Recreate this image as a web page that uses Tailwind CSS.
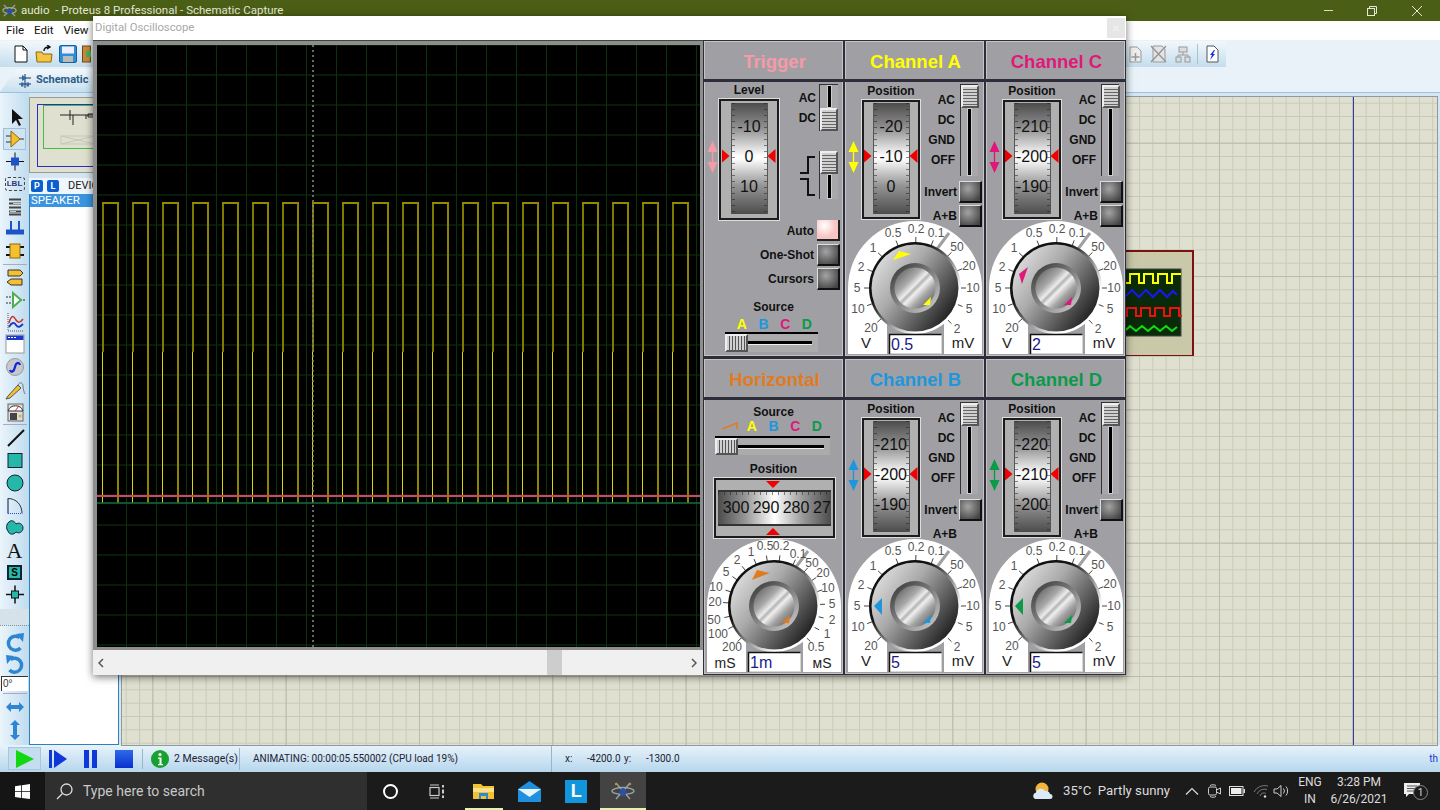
<!DOCTYPE html>
<html lang="en">
<head>
<meta charset="UTF-8">
<title>audio - Proteus 8 Professional</title>
<script src="https://cdn.jsdelivr.net/npm/@tailwindcss/browser@4"></script>
</head>
<body class="m-0 overflow-hidden">
<!-- shared gradients for the dials -->
<svg class="absolute w-0 h-0">
  <defs>
    <linearGradient id="ringG" x1="0.1" y1="0.1" x2="0.9" y2="0.9"><stop offset="0.3" stop-color="#111"/><stop offset="0.55" stop-color="#888"/><stop offset="0.8" stop-color="#fff"/></linearGradient>
    <linearGradient id="knobG" x1="0.05" y1="0.2" x2="0.95" y2="0.85"><stop offset="0" stop-color="#dcdcdc"/><stop offset="0.35" stop-color="#aaa"/><stop offset="0.62" stop-color="#6c6c6c"/><stop offset="1" stop-color="#161616"/></linearGradient>
    <linearGradient id="hubRing" x1="0.15" y1="0.1" x2="0.85" y2="0.9"><stop offset="0" stop-color="#444"/><stop offset="1" stop-color="#c0c0c0"/></linearGradient>
    <linearGradient id="hubG" x1="0.1" y1="0.1" x2="0.9" y2="0.9"><stop offset="0" stop-color="#6a6a6a"/><stop offset="0.3" stop-color="#a8a8a8"/><stop offset="0.45" stop-color="#ececec"/><stop offset="0.51" stop-color="#b4b4b4"/><stop offset="0.58" stop-color="#f0f0f0"/><stop offset="0.75" stop-color="#a4a4a4"/><stop offset="1" stop-color="#666"/></linearGradient>
  </defs>
</svg>

<div class="relative w-[1440px] h-[810px] flex flex-col overflow-hidden font-['Roboto',sans-serif]">

  <!-- title bar -->
  <div class="h-[21px] bg-[#4b5e15] flex items-center text-[#e4e8d8] shrink-0">
    <svg class="w-[15px] h-[15px] ml-[2px]" viewBox="0 0 16 16"><g fill="none" stroke="#9aa5a8" stroke-width="1.4"><path d="M2 2l12 12M14 2L2 14"/><ellipse cx="8" cy="8" rx="7" ry="3"/></g><circle cx="8" cy="9" r="3" fill="#2c4fa8"/></svg>
    <span class="ml-[4px] text-[11.500px] whitespace-pre">audio  - Proteus 8 Professional - Schematic Capture</span>
    <div class="ml-auto flex items-center">
      <span class="w-[44px] flex justify-center"><span class="w-[9px] h-[1px] bg-[#d8dcc8]"></span></span>
      <span class="w-[44px] flex justify-center"><svg class="w-[10px] h-[10px]" viewBox="0 0 10 10" fill="none" stroke="#e4e8d8"><rect x=".5" y="2.5" width="7" height="7"/><path d="M2.5 2.5v-2h7v7h-2"/></svg></span>
      <span class="w-[46px] flex justify-center"><svg class="w-[10px] h-[10px]" viewBox="0 0 10 10" stroke="#e4e8d8"><path d="M0 0l10 10M10 0L0 10"/></svg></span>
    </div>
  </div>

  <!-- menu bar -->
  <div class="h-[19px] bg-white flex items-center pl-[6px] gap-[10px] text-[11.500px] text-[#111] shrink-0">
    <span>File</span><span>Edit</span><span>View</span>
  </div>

  <!-- toolbar -->
  <div class="h-[28px] bg-[#e8f2f8] shrink-0">
    <div class="w-[1226px] h-[26px] mt-[1px] bg-[linear-gradient(#f2f8fc,#c4dded)] flex items-center pl-[14px]">
      <svg class="w-[14px] h-[18px]" viewBox="0 0 14 18"><path d="M1 1h8l4 4v12H1z" fill="#fff" stroke="#111"/><path d="M9 1v4h4" fill="none" stroke="#111"/></svg>
      <svg class="w-[19px] h-[18px] ml-[7px]" viewBox="0 0 19 18"><path d="M1 7h6l1 2h9l-1 8H2z" fill="#f4c542" stroke="#8a6a10"/><path d="M9 6c0-3 2-4 5-4M12 0l3 2-3 2" fill="none" stroke="#111" stroke-width="1.4"/></svg>
      <svg class="w-[18px] h-[18px] ml-[5px]" viewBox="0 0 18 18"><rect x="0.5" y="0.5" width="17" height="17" rx="1.5" fill="#2e8fd6" stroke="#19609a"/><rect x="3" y="1.5" width="12" height="7" fill="#eef"/><rect x="4" y="11" width="10" height="6" fill="#bbb"/></svg>
      <svg class="w-[9px] h-[18px] ml-[5px]" viewBox="0 0 9 18"><rect x="0.5" y="1" width="8" height="16" fill="#c98a3c" stroke="#6b4a1c"/><path d="M4 6h5v6H4z" fill="#4caf50"/></svg>
      <div class="ml-auto flex items-center pr-[7px]">
        <svg class="w-[13px] h-[17px]" viewBox="0 0 13 17" fill="#eee" stroke="#999"><path d="M1 1h7l4 4v11H1z"/><path d="M6.5 7v8M2.5 11h8" stroke-width="1.5"/></svg>
        <svg class="w-[17px] h-[18px] ml-[8px]" viewBox="0 0 17 18" fill="#e4e4e4" stroke="#999"><path d="M3 1h9l3 3v13H3z"/><path d="M1 1l15 16M16 1L1 17" stroke-width="1.5"/></svg>
        <svg class="w-[16px] h-[17px] ml-[8px]" viewBox="0 0 16 17" fill="#ddd" stroke="#999"><rect x="4" y="1" width="8" height="5"/><rect x="1" y="11" width="5" height="5"/><rect x="10" y="11" width="5" height="5"/><path d="M8 6v3M3 11V9h10v2" fill="none"/></svg>
        <span class="w-[1px] h-[20px] bg-[#a9c0d0] ml-[6px]"></span>
        <svg class="w-[13px] h-[18px] ml-[8px]" viewBox="0 0 13 18"><path d="M1 1h7l4 4v12H1z" fill="#fff" stroke="#555"/><path d="M8 5L4 10h2l-2 5 5-6H7l2-4z" fill="#1133dd"/></svg>
      </div>
    </div>
  </div>

  <!-- tab row -->
  <div class="h-[25px] bg-[#e8f2f8] border-b border-[#9cc3dd] shrink-0">
    <div class="w-[100px] h-[23px] mt-[1px] bg-[linear-gradient(#f2f8fc,#c8e0f0)] [clip-path:polygon(0_100%,16px_0,100%_0,100%_100%)] flex items-center pl-[18px]">
      <svg class="w-[14px] h-[14px]" viewBox="0 0 14 14"><path d="M7 0v14M1 4h12M1 10h12" stroke="#234" fill="none"/><path d="M4 1l5 3-5 3z" fill="#2a6ab0"/><rect x="3" y="8.5" width="2.5" height="4" fill="#2a6ab0"/><rect x="8.5" y="8.5" width="2.5" height="4" fill="#2a6ab0"/></svg>
      <span class="ml-[4px] text-[11px] font-bold text-[#2d5b86] whitespace-nowrap">Schematic</span>
    </div>
  </div>

  <!-- main area -->
  <div class="h-[652px] flex bg-[#d3e6f2] shrink-0">
    <!-- mode toolbar -->
    <div class="w-[29px] shrink-0 bg-[linear-gradient(90deg,#eaf4fb,#bfdcef)] flex flex-col items-center pt-[13px]">
      <svg class="w-[22px] h-[22px]" viewBox="0 0 22 22"><path d="M8 3v15l4-4 3 6 2-1-3-6h5z" fill="#111"/></svg>
      <div class="w-[23px] h-[22px] bg-[#cfe3f2] border border-[#9fc1d8] flex items-center justify-center"><svg class="w-[20px] h-[20px]" viewBox="0 0 20 20"><path d="M1 7h6M1 13h6M13 10h6" stroke="#333"/><path d="M6 2l9 8-9 8z" fill="#f4c030" stroke="#8a6a10"/></svg></div>
      <svg class="w-[22px] h-[23px]" viewBox="0 0 22 22"><path d="M2 11h18M11 2v18" stroke="#111"/><rect x="7" y="7" width="8" height="8" fill="#1c54c8"/></svg>
      <div class="w-[20px] h-[14px] my-[4px] border border-dashed border-[#444] rounded-[3px] text-[8px] leading-[12px] font-bold text-center text-[#2c3a70] font-['Liberation_Sans',sans-serif]">LBL</div>
      <svg class="w-[22px] h-[23px]" viewBox="0 0 22 22"><path d="M5 4h12M5 8h12M5 12h12M5 16h12M5 19h12" stroke="#444" stroke-width="2"/><path d="M9 8h8M6 16h6" stroke="#ccc"/></svg>
      <svg class="w-[22px] h-[22px]" viewBox="0 0 22 22"><path d="M2 14h18" stroke="#1c54c8" stroke-width="5"/><path d="M7 3v10M15 3v10" stroke="#1c54c8" stroke-width="2"/></svg>
      <svg class="w-[22px] h-[22px]" viewBox="0 0 22 22"><path d="M2 7h4M2 15h4M16 7h4M16 15h4" stroke="#111" stroke-width="2"/><rect x="6" y="4" width="10" height="14" fill="#f4c030" stroke="#8a6a10"/></svg>
      <span class="w-[24px] h-[1px] bg-[#aab] my-[2px]"></span>
      <svg class="w-[22px] h-[22px]" viewBox="0 0 22 22"><path d="M4 3h12l3 3-3 3H4zM18 12H7l-4 3 4 3h11z" fill="#f4c030" stroke="#333"/></svg>
      <svg class="w-[22px] h-[22px]" viewBox="0 0 22 22"><path d="M2 8h6M2 14h6M16 11h5" stroke="#333" stroke-dasharray="2 1"/><path d="M9 4l8 7-8 7z" fill="#fff" stroke="#4cb050" stroke-width="2"/></svg>
      <svg class="w-[22px] h-[22px]" viewBox="0 0 22 22"><path d="M4 2v18h16" stroke="#555" stroke-dasharray="1 1" fill="none"/><path d="M5 12c3-10 5-6 7-3s4 3 7-1" stroke="#c83232" stroke-width="1.5" fill="none"/><path d="M5 16c3-5 5-5 7-2s4 2 7-1" stroke="#1c38c8" stroke-width="1.8" fill="none"/></svg>
      <svg class="w-[20px] h-[20px] my-[1px]" viewBox="0 0 20 20"><rect x="1" y="1" width="18" height="18" fill="#fff" stroke="#999"/><rect x="1.5" y="1.5" width="17" height="4.5" fill="#1c38c8"/><path d="M3 3.5h8" stroke="#fff" stroke-dasharray="2 1"/></svg>
      <svg class="w-[20px] h-[22px] my-[1px]" viewBox="0 0 20 20"><circle cx="10" cy="10" r="8.5" fill="#c8c8cc" stroke="#999"/><path d="M5 13c1 3 4 2 5-3s4-5 5-2" stroke="#0a28d8" stroke-width="2.2" fill="none"/></svg>
      <svg class="w-[22px] h-[22px]" viewBox="0 0 22 22"><path d="M4 17l10-11 3 3-11 10-4 1z" fill="#f4c030" stroke="#555"/><path d="M14 6c2-4 5-2 5 1s1 6 2 8" fill="none" stroke="#777"/></svg>
      <svg class="w-[22px] h-[22px]" viewBox="0 0 22 22"><rect x="4" y="3" width="15" height="17" fill="#ddd" stroke="#666"/><path d="M4 10a8 8 0 0 1 15 0z" fill="#fff" stroke="#333"/><path d="M11 10l4-5" stroke="#d22"/><rect x="6" y="12" width="7" height="7" fill="#444"/><circle cx="16" cy="15" r="1.5" fill="#e0b020"/></svg>
      <span class="w-[24px] h-[1px] bg-[#aab] my-[1px]"></span>
      <svg class="w-[22px] h-[22px] mt-[1px]" viewBox="0 0 22 22"><path d="M4 19L20 3" stroke="#111" stroke-width="2"/></svg>
      <svg class="w-[22px] h-[23px]" viewBox="0 0 22 22"><rect x="4" y="4" width="14" height="14" fill="#25b8a8" stroke="#123"/></svg>
      <svg class="w-[22px] h-[22px]" viewBox="0 0 22 22"><circle cx="11" cy="11" r="8" fill="#25b8a8" stroke="#123"/></svg>
      <svg class="w-[22px] h-[23px]" viewBox="0 0 22 22"><path d="M4 19V4c8 0 14 6 14 15" fill="none" stroke="#333"/><path d="M4 19h14M4 19V4" stroke="#2c50c8" stroke-dasharray="1 1"/></svg>
      <svg class="w-[22px] h-[22px]" viewBox="0 0 22 22"><path d="M5 5c3-3 6 0 7 2 3-2 7 0 7 4s-4 6-7 4c-2 3-7 3-8-1-2-2-2-7 1-9z" fill="#25b8a8" stroke="#123"/></svg>
      <span class="h-[23px] leading-[23px] text-[22px] font-['Liberation_Serif',serif] text-[#111]">A</span>
      <div class="w-[15px] h-[15px] my-[3px] bg-[#25b8a8] border-2 border-[#123] flex items-center justify-center text-[10px] font-bold font-['Liberation_Sans',sans-serif] leading-none">S</div>
      <svg class="w-[22px] h-[23px]" viewBox="0 0 22 22"><path d="M2 11h18M11 2v18" stroke="#111" stroke-width="1.5"/><rect x="7.5" y="7.5" width="7" height="7" fill="#25b8a8" stroke="#111"/></svg>
      <div class="w-[29px] h-[16px] bg-[#d6e2ea] mt-[3px]"></div>
      <div class="w-[29px] border-t border-dotted border-[#7d93a3] mb-[6px]"></div>
      <svg class="w-[20px] h-[22px]" viewBox="0 0 20 20"><path d="M15.500 15a7 7 0 1 1-1-10.500" fill="none" stroke="#2e86d0" stroke-width="3.500"/><path d="M11 1l8-1-1 9z" fill="#2e86d0"/></svg>
      <svg class="w-[20px] h-[22px]" viewBox="0 0 20 20"><path d="M5.500 4.500a7 7 0 1 1-1 10.500" fill="none" stroke="#2e86d0" stroke-width="3.500"/><path d="M9 1L1 0l1 9z" fill="#2e86d0"/></svg>
      <div class="w-[27px] h-[15px] bg-white border-l border-t border-[#333] text-[10px] leading-[13px] pl-[1px] font-['Liberation_Sans',sans-serif] text-[#333]">0°</div>
      <span class="w-[24px] h-[1px] bg-[#aab] my-[2px]"></span>
      <svg class="w-[20px] h-[22px]" viewBox="0 0 20 20"><path d="M1 10l5-5v3h8V5l5 5-5 5v-3H6v3z" fill="#2e86d0"/></svg>
      <svg class="w-[20px] h-[24px]" viewBox="0 0 20 20"><path d="M10 0l5 5h-3v10h3l-5 5-5-5h3V5H5z" fill="#2e86d0"/></svg>
    </div>

    <!-- preview and device list -->
    <div class="w-[90px] shrink-0 flex flex-col pt-[4px]">
      <div class="h-[76px] bg-[#e0e0d0] border border-[#9a9a90] pl-[7px] pt-[6px]">
        <div class="h-[63px] border border-[#2c2cc8] border-r-0 pl-[5px]">
          <div class="h-[44px] border border-[#3ec03e] border-r-0 relative">
            <svg class="absolute left-[14px] top-[2px] w-[40px] h-[40px]" viewBox="0 0 40 40" fill="none" stroke="#222"><path d="M2 7h36M12 2v10M15 7v10M28 7v4M30 6h6v3h-6z"/><path d="M3 28h34v8H3zM3 28l34 8M37 28L3 36" stroke="#c8c8b8"/></svg>
          </div>
        </div>
      </div>
      <div class="h-[16px] mt-[5px] flex items-center gap-[4px] pl-[2px] bg-[#eef5fb] text-[11px] text-[#222]">
        <span class="w-[12px] h-[12px] rounded-[2px] bg-[#0b5fd0] text-white text-[9px] leading-[12px] font-bold text-center">P</span>
        <span class="w-[12px] h-[12px] rounded-[2px] bg-[#0b5fd0] text-white text-[9px] leading-[12px] font-bold text-center">L</span>
        <span class="ml-[5px] whitespace-nowrap overflow-hidden">DEVICES</span>
      </div>
      <div class="flex-1 bg-white border border-t-0 border-[#2e7fbc]">
        <div class="h-[13px] bg-[#3a94e0] text-white text-[11.500px] leading-[13px] pl-[1px]">SPEAKER</div>
      </div>
    </div>

    <!-- schematic sheet -->
    <div class="relative flex-1 ml-[3px] mr-[3px] mt-[4px] outline outline-1 outline-[#8e9a9e]">
      <svg class="block w-full h-full" viewBox="0 0 1315 648">
        <defs>
          <pattern id="minor" width="13.333" height="13.333" x="3.67" y="5.7" patternUnits="userSpaceOnUse"><path d="M0 .5H13.4M.5 0V13.4" stroke="#c9c9b8" fill="none"/></pattern>
          <pattern id="major" width="133.33" height="133.33" x="30.3" y="45.7" patternUnits="userSpaceOnUse"><path d="M0 .5H134M.5 0V134" stroke="#bcbcab" fill="none"/></pattern>
        </defs>
        <rect width="1315" height="648" fill="#e0e0d0"/>
        <rect width="1315" height="648" fill="url(#minor)"/>
        <rect width="1315" height="648" fill="url(#major)"/>
        <path d="M1231.500 0V648" stroke="#3838a8"/>
      </svg>
      <!-- oscilloscope symbol on the sheet -->
      <svg class="absolute left-[970px] top-[151px] w-[104px] h-[108px]" viewBox="1092 248 104 108">
        <rect x="1093" y="251" width="100" height="105" fill="#c9c9a9" stroke="#7a1212" stroke-width="2"/>
        <rect x="1100" y="269" width="81" height="67" fill="#0a2a0a" stroke="#444"/>
        <path d="M1126 283h4v-9h9v9h5v-9h9v9h5v-9h9v9h5v-9h9" fill="none" stroke="#ffff00" stroke-width="2"/>
        <path d="M1126 296l6-6 7 7 7-7 7 7 7-7 7 7 6-6 4 4" fill="none" stroke="#1818f0" stroke-width="2"/>
        <path d="M1126 316h1v-8h9v8h5v-8h9v8h5v-8h9v8h6v-8h9v8h3" fill="none" stroke="#f01010" stroke-width="2"/>
        <path d="M1126 330l4-4 6 5 6-5 6 5 6-5 6 5 6-5 6 5 5-4" fill="none" stroke="#10e010" stroke-width="2"/>
      </svg>
    </div>
  </div>

  <!-- status bar -->
  <div class="h-[27px] bg-[linear-gradient(#e8f3fb,#b6d6ec)] flex items-center text-[10px] text-[#223] shrink-0">
    <div class="ml-[8px] w-[33px] h-[23px] bg-[#c5deef] border border-[#a5c6de] flex items-center justify-center"><svg class="w-[19px] h-[18px]" viewBox="0 0 19 18"><path d="M1 0l18 9-18 9z" fill="#12d812"/></svg></div>
    <svg class="ml-[8px] w-[18px] h-[18px]" viewBox="0 0 18 18"><path d="M0 0h3v18H0z" fill="#1038d8"/><path d="M5 0l13 9-13 9z" fill="#1038d8"/></svg>
    <svg class="ml-[17px] w-[14px] h-[18px]" viewBox="0 0 14 18" fill="#1038d8"><rect width="5" height="18"/><rect x="8" width="5" height="18"/></svg>
    <div class="ml-[17px] w-[18px] h-[18px] bg-[linear-gradient(#2f6be8,#0a2fd0)]"></div>
    <span class="ml-[9px] w-[1px] h-[20px] bg-[#9bb5c8]"></span>
    <svg class="ml-[8px] w-[18px] h-[18px]" viewBox="0 0 18 18"><circle cx="9" cy="9" r="9" fill="#18a030"/><circle cx="9" cy="4.5" r="1.6" fill="#fff"/><path d="M7 7.5h3.5V14H12v1.2H7V14h1.5V8.7H7z" fill="#fff"/></svg>
    <span class="ml-[5px] w-[65px] whitespace-nowrap text-[10.500px]">2 Message(s)</span>
    <span class="w-[1px] h-[22px] bg-[#9bb5c8]"></span>
    <span class="ml-[13px] w-[298px] whitespace-nowrap">ANIMATING: 00:00:05.550002 (CPU load 19%)</span>
    <span class="w-[1px] h-[27px] bg-[#9bb5c8]"></span>
    <span class="ml-[13px] w-[22px]">x:</span>
    <span class="w-[37px]">-4200.0</span>
    <span class="w-[22px]">y:</span>
    <span class="w-[60px]">-1300.0</span>
    <span class="ml-auto mr-[2px] text-[#1a3ad0]">th</span>
  </div>

  <!-- windows taskbar -->
  <div class="h-[38px] bg-[#1b1b1b] flex items-center text-[#dcdcdc] shrink-0">
    <div class="w-[45px] h-full bg-[#151515] flex items-center justify-center"><svg class="w-[15px] h-[15px]" viewBox="0 0 15 15" fill="#fff"><path d="M0 2.2l6.2-.9v5.9H0zM7 1.2L15 0v7.2H7zM0 8h6.2v5.9L0 13zM7 8h8v7l-8-1.1z"/></svg></div>
    <div class="w-[322px] h-full bg-[#2f2f2f] flex items-center pl-[11px]">
      <svg class="w-[17px] h-[17px]" viewBox="0 0 17 17" fill="none" stroke="#ddd" stroke-width="1.3"><circle cx="10.5" cy="6.5" r="5.5"/><path d="M6.5 10.5L1 16"/></svg>
      <span class="ml-[10px] text-[14px] text-[#c8c8c8] whitespace-nowrap">Type here to search</span>
    </div>
    <div class="w-[46.5px] h-full flex items-center justify-center"><span class="w-[15px] h-[15px] rounded-full border-2 border-white"></span></div>
    <div class="w-[46.5px] h-full flex items-center justify-center"><svg class="w-[16px] h-[15px]" viewBox="0 0 16 15" fill="none" stroke="#ccc" stroke-width="1.2"><path d="M1 1h9M1 14h9"/><rect x="1" y="3.5" width="9" height="8"/><path d="M14 1v2.500M14 5.500v4M14 11.500V14" stroke-width="2"/></svg></div>
    <div class="relative w-[46.5px] h-full flex items-center justify-center">
      <svg class="w-[21px] h-[18px]" viewBox="0 0 21 18"><path d="M0 2h8l2 2h11v13H0z" fill="#f2c233"/><path d="M0 6h21v4H0z" fill="#fbe08a"/><path d="M6 11h9v6h-2v-3H8v3H6z" fill="#2a8ad8"/></svg>
      <span class="absolute left-[5px] right-[4px] bottom-0 h-[2px] bg-[#e8f0b0]"></span>
    </div>
    <div class="w-[46.5px] h-full flex items-center justify-center"><svg class="w-[23px] h-[21px]" viewBox="0 0 23 21"><path d="M0 8L11.500 0 23 8v13H0z" fill="#1f8fe0"/><path d="M0 8l11.500 8L23 8z" fill="#e8f4fc"/></svg></div>
    <div class="w-[46.5px] h-full flex items-center justify-center"><div class="w-[22px] h-[23px] bg-[#1296db] flex items-center justify-center text-white font-bold text-[18px] leading-none font-['Liberation_Sans',sans-serif]">L</div></div>
    <div class="relative w-[46.5px] h-full bg-[#434343] flex items-center justify-center">
      <svg class="w-[24px] h-[18px]" viewBox="0 0 24 18"><g fill="none" stroke="#9aa5a8" stroke-width="1.3"><path d="M5 1l14 16M19 1L5 17"/><ellipse cx="12" cy="9" rx="11" ry="3.500"/></g><circle cx="12" cy="10" r="3.500" fill="#2c4fa8"/><circle cx="5" cy="2" r="1.200" fill="#c98a3c"/><circle cx="19" cy="2" r="1.200" fill="#c98a3c"/></svg>
      <span class="absolute left-0 right-0 bottom-0 h-[2px] bg-[#e8f0b0]"></span>
    </div>
    <div class="ml-[387px] flex items-center h-full">
      <svg class="w-[20px] h-[20px]" viewBox="0 0 20 20"><circle cx="9" cy="8" r="6.500" fill="#f4b53a"/><path d="M2 18a3.500 3.500 0 0 1 1-6.500A5 5 0 0 1 12 10a4 4 0 0 1 5 3 2.500 2.500 0 0 1 0 5z" fill="#dbeaf6"/></svg>
      <span class="ml-[10px] w-[107px] text-[13.200px] whitespace-pre">35°C  Partly sunny</span>
      <svg class="ml-[14px] w-[16px] h-[8px]" viewBox="0 0 16 8" fill="none" stroke="#ddd" stroke-width="1.2"><path d="M2 7.500l6-6 6 6"/></svg>
      <svg class="ml-[7px] w-[16px] h-[16px]" viewBox="0 0 16 16" fill="none" stroke="#ccc"><rect x="1.500" y="4" width="8" height="8" rx="1.500"/><path d="M9.500 7l4-2v6l-4-2M3 2.500c2-1 4-1 6 0M3 13.500c2 1 4 1 6 0"/></svg>
      <svg class="ml-[6px] w-[16px] h-[10px]" viewBox="0 0 16 10"><rect x=".5" y=".5" width="13.500" height="9" fill="none" stroke="#ddd"/><rect x="2" y="2" width="10.500" height="6" fill="#eee"/><rect x="14.500" y="3" width="1.500" height="4" fill="#ddd"/></svg>
      <svg class="ml-[8px] w-[16px] h-[14px]" viewBox="0 0 16 14" fill="none" stroke="#777"><path d="M1 8a12 12 0 0 1 14-6M4 10a8 8 0 0 1 10-4.500M7 12a4 4 0 0 1 6-2.500"/><circle cx="12" cy="12.500" r="1.200" fill="#ddd" stroke="none"/></svg>
      <svg class="ml-[4px] w-[16px] h-[14px]" viewBox="0 0 16 14" fill="none" stroke="#ccc"><path d="M1 5h3l4-3.500v11L4 9H1zM10.500 4.500a4 4 0 0 1 0 5M13 2.500a7 7 0 0 1 0 9"/></svg>
      <div class="ml-[5px] w-[32px] flex flex-col items-center text-[12px] leading-[17px]"><span>ENG</span><span>IN</span></div>
      <div class="ml-[2px] w-[62px] flex flex-col items-center text-[12px] leading-[17px]"><span>3:28 PM</span><span>6/26/2021</span></div>
      <div class="relative ml-[11px] w-[24px] h-full flex items-center justify-center">
        <svg class="w-[16px] h-[16px] -mt-[2px] -ml-[3px]" viewBox="0 0 16 16"><path d="M0 1h16v11H5l-3 3v-3H0z" fill="#eee"/><path d="M3 4h10M3 6.500h10M3 9h7" stroke="#555"/></svg>
        <span class="absolute left-[12px] top-[13px] w-[15px] h-[15px] rounded-full bg-[#1b1b1b] border border-[#888] text-[10px] leading-[13px] text-center">1</span>
      </div>
    </div>
  </div>

  <!-- Digital Oscilloscope popup window -->
  <div class="absolute left-[93px] top-[16px] w-[1033px] h-[659px] flex flex-col bg-[#8c8c8c] shadow-[0_2px_8px_rgba(0,0,0,0.55)]">
    <div class="h-[24px] bg-white flex items-center pl-[2px] text-[11.300px] text-[#a8a8a8] shrink-0">
      <span>Digital Oscilloscope</span>
      <span class="ml-auto mr-[1px] w-[18px] h-[20px] bg-[#e6e6e6] flex items-center justify-center text-[10px] text-[#f4f4f4]">✕</span>
    </div>
    <div class="flex h-[635px]">
      <div class="w-[610px] flex flex-col shrink-0">
        <div class="h-[610px] pl-[3.500px] pt-[4px] bg-[#8e8e8e] border-t border-[#444]">
          <svg class="block w-[603px] h-[602px]" viewBox="97 44 603 602">
            <defs>
              <pattern id="scopeGrid" width="30" height="30" x="96" y="43.500" patternUnits="userSpaceOnUse"><path d="M0 .5H30M.5 0V30" stroke="#0b330b" fill="none"/></pattern>
              <pattern id="pulse" width="30" height="301" x="102" y="201" patternUnits="userSpaceOnUse">
                <rect width="2" height="150" fill="#7f7a00"/>
                <rect y="150" width="1" height="151" fill="#e0d800"/>
                <rect x="15" width="2" height="301" fill="#8a8400"/>
                <rect width="17" height="2" fill="#918b00"/>
              </pattern>
            </defs>
            <rect x="97" y="44" width="603" height="602" fill="#000"/>
            <rect x="97" y="44" width="603" height="602" fill="url(#scopeGrid)"/>
            <rect x="102" y="201" width="587" height="301" fill="url(#pulse)"/>
            <path d="M313 44V646" stroke="#8a8a8a" stroke-width="1.500" stroke-dasharray="2 3"/>
            <path d="M97 495H700" stroke="#c84a64" stroke-width="2"/>
            <path d="M97 502H700" stroke="#10703c" stroke-width="1.500"/>
          </svg>
        </div>
        <!-- scroll bar -->
        <div class="h-[25px] bg-[#f0f0f0] flex items-center pl-[5px] pr-[6px]">
          <svg class="w-[6px] h-[10px]" viewBox="0 0 6 10" fill="none" stroke="#555" stroke-width="1.500"><path d="M5 1L1 5l4 4"/></svg>
          <span class="ml-[443px] w-[15px] h-full bg-[#cdcdcd]"></span>
          <svg class="ml-auto w-[6px] h-[10px]" viewBox="0 0 6 10" fill="none" stroke="#555" stroke-width="1.500"><path d="M1 1l4 4-4 4"/></svg>
        </div>
      </div>
      <div id="controls" class="grid grid-cols-[139px_139px_139px] grid-rows-[315px_315px] gap-x-[2px] gap-y-[3px] pl-[1px] pr-[1px] pt-[1px] bg-[#2e2e3a] w-[423px]"></div>
    </div>
  </div>
</div>

<script>
  const COLORS = { A: '#ffff00', B: '#1e96dc', C: '#e0187a', D: '#0a9a4a' };

  const V_LABELS = [['0.5',48,11],['0.2',71,7],['0.1',91,11],['1',28,26],['2',16,45],['5',12,66],['10',13,87],['20',26,106],['50',112,25],['20',124,44],['10',128,66],['5',124,87],['2',112,107]];
  const H_LABELS = [['0.5',61,6],['0.2',77,6],['0.1',94,14],['1',47,12],['2',33,20],['5',22,32],['10',12,47],['20',11,62],['50',10,80],['100',14,94],['200',28,107],['50',108,23],['20',119,33],['10',124,48],['5',128,64],['2',128,80],['1',123,94],['0.5',112,107]];

  function panel(title, color, body) {
    return `<section class="flex flex-col bg-[#a0a0a4] shadow-[inset_0_0_0_1px_#c4c4c8] font-['Liberation_Sans',sans-serif] text-[#111] overflow-hidden">
      <div class="h-[41px] shrink-0 pt-[3px] pl-[2px] border-b-[3px] border-[#2e2e3a] flex items-center justify-center text-[18.500px] font-bold" style="color:${color}">${title}</div>
      ${body}</section>`;
  }

  function arrow(color, extra) {
    return `<svg class="${extra} w-[11px] h-[32px] shrink-0" viewBox="0 0 11 32" style="color:${color}"><path d="M5.500 0L10.500 11H6.200V21H10.500L5.500 32 .5 21H4.800V11H.5z" fill="currentColor"/></svg>`;
  }

  function drum(nums) {
    return `<div class="relative w-[37px] h-[111px] border-x border-[#555] bg-[linear-gradient(#4c4c4c,#969696_24%,#fff_48%,#fff_50%,#969696_74%,#4c4c4c)] pt-[9px] text-center text-[16px] leading-[30px]">
        <span class="absolute left-0 top-0 bottom-0 w-[3px] bg-[repeating-linear-gradient(#2228_0_1px,transparent_1px_6px)]"></span>
        <span class="absolute right-0 top-0 bottom-0 w-[3px] bg-[repeating-linear-gradient(#2228_0_1px,transparent_1px_6px)]"></span>
        ${nums.map(n => `<div class="relative h-[30px] whitespace-nowrap flex justify-center">${n}</div>`).join('')}
        <span class="absolute left-[-10px] top-[46px] w-[8px] h-[14px] bg-[#f00000] [clip-path:polygon(0_0,100%_50%,0_100%)]"></span>
        <span class="absolute right-[-9px] top-[46px] w-[8px] h-[14px] bg-[#f00000] [clip-path:polygon(100%_0,0_50%,100%_100%)]"></span>
      </div>`;
  }

  const handleV = `<div class="w-[18px] h-[23px] shrink-0 bg-[repeating-linear-gradient(#d0d0d0_0_2px,#666_2px_3px)] border-2 border-t-[#eee] border-l-[#eee] border-r-[#555] border-b-[#555]"></div>`;
  const handleH = `<div class="w-[23px] h-full shrink-0 bg-[repeating-linear-gradient(90deg,#d0d0d0_0_2px,#555_2px_3px)] border-2 border-t-[#eee] border-l-[#eee] border-r-[#555] border-b-[#555]"></div>`;
  const trackV = `<div class="flex-1 flex justify-center py-[1px]"><span class="w-[3px] h-full bg-black outline outline-1 outline-[#ccc]"></span></div>`;

  function button(on) {
    return on
      ? `<div class="w-[23px] h-[21px] shrink-0 bg-[radial-gradient(circle_at_35%_30%,#fff,#f8c4c4_60%)] border-r-2 border-b-2 border-[#222]"></div>`
      : `<div class="w-[23px] h-[22px] shrink-0 bg-[radial-gradient(circle_at_40%_35%,#a4a4a4,#444_85%)] border-r-2 border-b-2 border-[#111] border-l border-t border-l-[#ddd] border-t-[#ddd]"></div>`;
  }

  function sliderH(extra) {
    return `<div class="${extra} h-[20px] bg-[#ababab] border-t-2 border-black flex items-stretch">${handleH}<div class="flex-1 flex items-center pr-[6px]"><span class="w-full h-[4px] bg-black border-b border-[#eee]"></span></div></div>`;
  }

  function dial(o) {
    const cx = 70, cy = 66;
    const labels = o.labels.map(([t, x, y]) => {
      const a = Math.atan2(y - cy, x - cx);
      const tick = `<line x1="${cx + 45 * Math.cos(a)}" y1="${cy + 45 * Math.sin(a)}" x2="${cx + 51 * Math.cos(a)}" y2="${cy + 51 * Math.sin(a)}" stroke="#444"/>`;
      return tick + `<text x="${x}" y="${y}" text-anchor="middle" dominant-baseline="central" font-size="12" fill="#555">${t}</text>`;
    }).join('');
    return `<svg class="block w-[139px] h-[134px] shrink-0 overflow-visible font-['Liberation_Sans',sans-serif]" viewBox="0 0 139 134">
      <path d="M3 132V66A67 67 0 0 1 137 66V132H99V96H42V132Z" fill="#fff"/>
      <path d="M92 27L104 11" stroke="#a0a0a4" stroke-width="3"/>
      ${labels}
      <circle cx="${cx}" cy="${cy}" r="46" fill="url(#ringG)"/>
      <circle cx="${cx}" cy="${cy}" r="43.500" fill="url(#knobG)"/>
      <circle cx="${cx}" cy="${cy}" r="25" fill="url(#hubRing)"/>
      <circle cx="${cx}" cy="${cy}" r="20.500" fill="url(#hubG)"/>
      <g transform="translate(${cx} ${cy})" fill="${o.color}"><polygon points="${o.pointer}"/><polygon points="8,17 16,9 15,17"/></g>
      <rect x="44.500" y="112.500" width="52" height="19" fill="#fff" stroke="#d8d8d8"/>
      <path d="M44.500 132V112.500H96.500" stroke="#111" fill="none" stroke-width="1.500"/>
      <text x="46" y="122.500" dominant-baseline="central" font-size="16" fill="#1a1a8c">${o.value}</text>
      <text x="21" y="${o.unitY}" text-anchor="middle" dominant-baseline="central" font-size="${o.unitSize}" fill="#222">${o.units[0]}</text>
      <text x="118" y="${o.unitY}" text-anchor="middle" dominant-baseline="central" font-size="${o.unitSize}" fill="#222">${o.units[1]}</text>
    </svg>`;
  }

  function channel(ch) {
    return panel(ch.title, ch.color, `
      <div class="flex h-[140px] shrink-0">
        ${arrow(ch.color, 'ml-[3px] mt-[59px]')}
        <div class="ml-[3px] w-[58px] shrink-0 flex flex-col items-center">
          <span class="h-[18px] leading-[18px] text-[12px] font-bold">Position</span>
          <div class="w-[58px] h-[119px] border-2 border-[#1c1c1c] outline outline-1 outline-[#ddd] bg-[#b0b0b0] flex justify-center pt-[1px]">${drum(ch.nums)}</div>
        </div>
        <div class="w-[64px] text-[12px] font-bold">
          <div class="flex">
            <div class="w-[35px] pt-[8px] text-right leading-[20px]"><div>AC</div><div>DC</div><div>GND</div><div>OFF</div></div>
            <div class="ml-[5px] mt-[2px] w-[18px] h-[92px] bg-[#a8a8ac] border-l border-t border-[#333] flex flex-col">${handleV}${trackV}</div>
          </div>
          <div class="mt-[5px] h-[22px] flex items-center"><span class="w-[37px] flex justify-end">Invert</span><span class="ml-[2px]">${button(false)}</span></div>
          <div class="mt-[2px] h-[22px] flex items-center"><span class="w-[37px] flex justify-end whitespace-nowrap">A+B</span><span class="ml-[2px]">${ch.sum ? button(false) : ''}</span></div>
        </div>
      </div>
      ${dial({ labels: V_LABELS, pointer: ch.pointer, color: ch.color, value: ch.value, units: ['V', 'mV'], unitSize: 15, unitY: 120 })}`);
  }

  function letters(extra, lead) {
    return `<div class="${extra} flex h-[12px] items-center text-[14px] font-bold leading-none">${lead}${Object.keys(COLORS).map(k =>
      `<span class="w-[21.700px] text-center" style="color:${COLORS[k]}">${k}</span>`).join('')}</div>`;
  }

  const trigger = panel('Trigger', '#f59aa8', `
    <div class="flex h-[138px] shrink-0">
      ${arrow('#f59aa8', 'ml-[3px] mt-[59px]')}
      <div class="ml-[1px] w-[60px] shrink-0 flex flex-col items-center">
        <span class="h-[17px] leading-[17px] text-[12px] font-bold">Level</span>
        <div class="w-[60px] h-[121px] border-2 border-[#1c1c1c] outline outline-1 outline-[#ddd] bg-[#b0b0b0] flex justify-center pt-[2px]">${drum(['-10', '0', '10'])}</div>
      </div>
      <div class="text-[12px] font-bold">
        <div class="flex">
          <div class="w-[37px] pt-[6px] text-right leading-[20px]"><div>AC</div><div>DC</div></div>
          <div class="ml-[3px] mt-[2px] w-[19px] h-[47px] bg-[#a8a8ac] border-l border-t border-[#333] flex flex-col">${trackV}${handleV}</div>
        </div>
        <div class="flex mt-[20px]">
          <svg class="ml-[21px] w-[16px] h-[48px]" viewBox="0 0 16 48" fill="none" stroke="#111" stroke-width="2"><path d="M0 22h8V6h7M0 28h8v16h7"/></svg>
          <div class="ml-[3px] w-[19px] h-[48px] bg-[#a8a8ac] border-l border-[#333] flex flex-col">${handleV}${trackV}</div>
        </div>
      </div>
    </div>
    <div class="text-[12px] font-bold pr-[3px] flex flex-col items-end">
      <div class="flex items-center gap-[3px] h-[21px]"><span>Auto</span>${button(true)}</div>
      <div class="flex items-center gap-[3px] h-[22px] mt-[3px]"><span>One-Shot</span>${button(false)}</div>
      <div class="flex items-center gap-[3px] h-[22px] mt-[2px]"><span>Cursors</span>${button(false)}</div>
    </div>
    <div class="mt-[9px] h-[16px] leading-[16px] text-center text-[12px] font-bold">Source</div>
    ${letters('ml-[27px] mt-[3px]', '')}
    ${sliderH('ml-[21px] mt-[2px] w-[93px]')}`);

  const horizontal = panel('Horizontal', '#e07b1f', `
    <div class="h-[140px] shrink-0 pt-[4px]">
      <div class="h-[16px] leading-[16px] text-center text-[12px] font-bold">Source</div>
      ${letters('', `<svg class="ml-[18px] mr-[3px] w-[16px] h-[8px]" viewBox="0 0 16 8" fill="none" stroke="#e07b1f" stroke-width="1.500"><path d="M0 7l15-6v6"/></svg>`)}
      ${sliderH('ml-[11px] mt-[4px] w-[115px] !h-[19px]')}
      <div class="mt-[6px] h-[16px] leading-[16px] text-center text-[12px] font-bold">Position</div>
      <div class="relative ml-[10px] mt-[1px] w-[121px] h-[60px] border-2 border-[#1c1c1c] outline outline-1 outline-[#ddd] bg-[#b0b0b0] pt-[10px]">
        <div class="relative h-[36px] mx-[2px] border-y-2 border-[#333] flex items-center pl-[3px] text-[16px] bg-[linear-gradient(90deg,#4c4c4c,#969696_24%,#fff_50%,#969696_76%,#4c4c4c)]">
          <span class="absolute left-0 right-0 top-0 h-[3px] bg-[repeating-linear-gradient(90deg,#2228_0_1px,transparent_1px_6px)]"></span>
          <span class="w-[30px] text-center shrink-0">300</span><span class="w-[30px] text-center shrink-0">290</span><span class="w-[30px] text-center shrink-0">280</span><span class="ml-[2px] shrink-0">27</span>
        </div>
        <span class="absolute left-[50px] top-[1px] w-[14px] h-[7px] bg-[#f00000] [clip-path:polygon(0_0,100%_0,50%_100%)]"></span>
        <span class="absolute left-[50px] bottom-[1px] w-[14px] h-[7px] bg-[#f00000] [clip-path:polygon(50%_0,100%_100%,0_100%)]"></span>
      </div>
    </div>
    ${dial({ labels: H_LABELS, pointer: '-22,-26 -4,-33 -17,-36', color: '#e07b1f', value: '1m', units: ['mS', 'мS'], unitSize: 14, unitY: 123 })}`);

  const chA = channel({ title: 'Channel A', color: COLORS.A, nums: ['-20', '-10', '0'], value: '0.5', pointer: '-22,-28 -4,-34 -16,-37', sum: true });
  const chC = channel({ title: 'Channel C', color: COLORS.C, nums: ['-210', '-200', '-190'], value: '2', pointer: '-37,-14 -28,-21 -34,-4', sum: true });
  const chB = channel({ title: 'Channel B', color: COLORS.B, nums: ['-210', '-200', '-190'], value: '5', pointer: '-41,0 -33,-8 -33,9', sum: false });
  const chD = channel({ title: 'Channel D', color: COLORS.D, nums: ['-220', '-210', '-200'], value: '5', pointer: '-41,0 -33,-8 -33,9', sum: false });

  document.getElementById('controls').innerHTML = trigger + chA + chC + horizontal + chB + chD;
</script>
</body>
</html>
